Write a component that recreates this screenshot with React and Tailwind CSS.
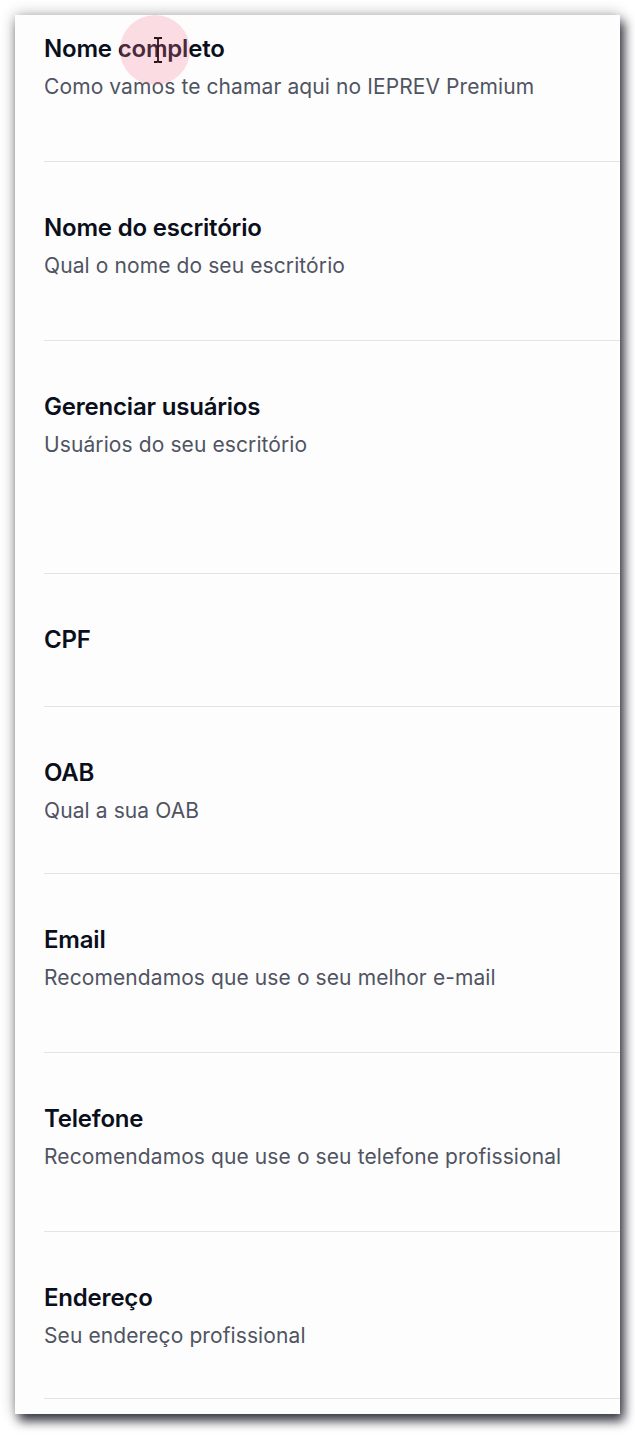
import React from 'react';

const sections = [
    { title: 'Nome completo', subtitle: 'Como vamos te chamar aqui no IEPREV Premium', h: 'h-[147px]', pt: 'pt-[19px]' },
    { title: 'Nome do escritório', subtitle: 'Qual o nome do seu escritório', h: 'h-[179px]', pt: 'pt-[51px]' },
    { title: 'Gerenciar usuários', subtitle: 'Usuários do seu escritório', h: 'h-[233px]', pt: 'pt-[51px]' },
    { title: 'CPF', subtitle: null, h: 'h-[133px]', pt: 'pt-[51px]' },
    { title: 'OAB', subtitle: 'Qual a sua OAB', h: 'h-[167px]', pt: 'pt-[51px]' },
    { title: 'Email', subtitle: 'Recomendamos que use o seu melhor e-mail', h: 'h-[179px]', pt: 'pt-[51px]' },
    { title: 'Telefone', subtitle: 'Recomendamos que use o seu telefone profissional', h: 'h-[179px]', pt: 'pt-[51px]' },
    { title: 'Endereço', subtitle: 'Seu endereço profissional', h: 'h-[167px]', pt: 'pt-[51px]' },
];

function Cursor() {
    return (
        <div className="absolute left-[105px] top-0 w-[70px] h-[70px] rounded-full bg-[#fb7b97]/25 pointer-events-none">
            <svg className="absolute left-[33px] top-[22px]" width="10" height="26" viewBox="0 0 10 26">
                <path d="M1 1h3l1 1 1-1h3M5 2v22M1 25h3l1-1 1 1h3" fill="none" stroke="#2a1418" strokeWidth="1.8" />
            </svg>
        </div>
    );
}

export default function App() {
    return (
        <div className="min-h-screen bg-white pt-[15px] pl-[15px] pr-[15px] pb-[22px]" style={{ fontFamily: 'Inter, "Noto Sans", sans-serif' }}>
            <div className="relative w-[605px] bg-[#fdfdfd] shadow-[0_0_14px_rgba(0,0,0,0.3),4px_7px_10px_rgba(20,20,35,0.8)] pl-[29px]">
                <Cursor />
                {sections.map((s) => (
                    <div key={s.title} className={`${s.h} ${s.pt} border-b border-[#e4e4e6] box-border`}>
                        <h3 className="text-[24px] leading-[30px] font-semibold text-[#0b0f1c] tracking-[-0.2px]">{s.title}</h3>
                        {s.subtitle && (
                            <p className="mt-[9px] text-[21px] leading-[28px] text-[#505462] tracking-[0.1px]">{s.subtitle}</p>
                        )}
                    </div>
                ))}
                <div className="h-[15px]" />
            </div>
        </div>
    );
}
